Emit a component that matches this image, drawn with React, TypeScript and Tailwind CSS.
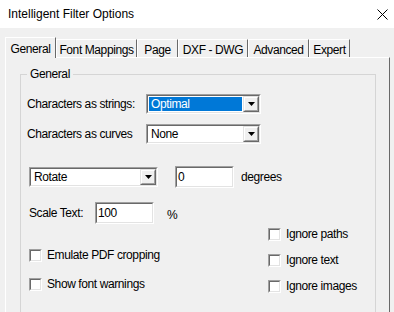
import React from "react";

// classic 3D bevels
const sunkenOuter =
  "border border-t-[#a0a0a0] border-l-[#a0a0a0] border-b-white border-r-white";
const sunkenInner =
  "border border-t-[#696969] border-l-[#696969] border-b-[#e3e3e3] border-r-[#e3e3e3]";

function DropButton() {
  return (
    <div className="flex w-[16px] border border-t-[#e3e3e3] border-l-[#e3e3e3] border-b-[#696969] border-r-[#696969]">
      <div className="flex flex-1 items-center justify-center border border-t-white border-l-white border-b-[#a0a0a0] border-r-[#a0a0a0] bg-[#f0f0f0]">
        <svg width="7" height="4" viewBox="0 0 7 4">
          <polygon points="0,0 7,0 3.5,4" fill="#000" />
        </svg>
      </div>
    </div>
  );
}

function Combo({ value, className, selected }: { value: string; className: string; selected?: boolean }) {
  return (
    <div className={`flex h-[20px] ${sunkenOuter} ${className}`}>
      <div className={`flex flex-1 bg-white ${sunkenInner}`}>
        <div className="flex flex-1 p-[1px]">
          <div
            className={`flex flex-1 items-center pl-[2px] ${
              selected ? "bg-[#0078d7] text-white" : "text-black"
            }`}
          >
            {value}
          </div>
        </div>
        <DropButton />
      </div>
    </div>
  );
}

function Field({ value, className }: { value: string; className: string }) {
  return (
    <div className={`flex h-[22px] ${sunkenOuter} ${className}`}>
      <div className={`flex-1 bg-white pl-[1px] pt-[2px] leading-[14px] ${sunkenInner}`}>{value}</div>
    </div>
  );
}

function Check({ label }: { label: string }) {
  return (
    <div className="flex h-[16px] items-center">
      <div className={`flex h-[13px] w-[13px] ${sunkenOuter}`}>
        <div className={`flex-1 bg-white ${sunkenInner}`} />
      </div>
      <span className="ml-[5px]">{label}</span>
    </div>
  );
}

const tabs = [
  { label: "Font Mappings", w: "w-[81px]" },
  { label: "Page", w: "w-[41px]" },
  { label: "DXF - DWG", w: "w-[70px]" },
  { label: "Advanced", w: "w-[61px]" },
  { label: "Expert", w: "w-[41px]" },
];

export default function App() {
  return (
    <div
      className="flex h-[312px] w-[394px] flex-col overflow-hidden bg-[#f0f0f0] text-[12px] tracking-[-0.4px] text-black"
      style={{ fontFamily: '"Liberation Sans", Arial, sans-serif' }}
    >
      {/* ── Title bar ─────────────────────────────────────────── */}
      <div className="flex h-[28px] shrink-0 items-center justify-between bg-white pl-[8px] pr-[6px]">
        <span className="text-[12px] tracking-normal">Intelligent Filter Options</span>
        <svg width="11" height="11" viewBox="0 0 11 11" className="mr-[0px]">
          <path d="M0.5 0.5 L10.5 10.5 M10.5 0.5 L0.5 10.5" stroke="#000" strokeWidth="1" />
        </svg>
      </div>

      {/* ── Tab strip ─────────────────────────────────────────── */}
      <div className="mt-[9px] flex h-[20px] shrink-0 items-end pl-[5px]">
        <div className="relative z-10 -mb-px flex h-[21px] w-[51px] justify-center border-l border-t border-r border-l-white border-t-white border-r-[#696969] bg-[#f0f0f0] pt-[2px]">
          General
        </div>
        {tabs.map((t) => (
          <div
            key={t.label}
            className={`flex h-[18px] ${t.w} justify-center border-l border-t border-r border-l-white border-t-white border-r-[#696969] pt-[1px]`}
          >
            {t.label}
          </div>
        ))}
      </div>

      {/* ── Tab page ──────────────────────────────────────────── */}
      <div className="ml-[5px] flex h-[300px] w-[385px] shrink-0 border-l border-t border-r border-l-white border-t-white border-r-[#696969] pl-[14px] pr-[13px] pt-[9px]">
        <fieldset className="h-[280px] flex-1 border border-[#d5d5d5]">
          <legend className="ml-[6px] px-[3px] leading-[14px]">General</legend>

          <div className="mt-[13px] flex h-[20px] items-center pl-[6px]">
            <span className="w-[119px]">Characters as strings:</span>
            <Combo value="Optimal" className="w-[115px]" selected />
          </div>

          <div className="mt-[10px] flex h-[20px] items-center pl-[6px]">
            <span className="w-[119px]">Characters as curves</span>
            <Combo value="None" className="w-[115px]" />
          </div>

          <div className="mt-[22px] flex h-[22px] items-center pl-[8px]">
            <Combo value="Rotate" className="w-[129px]" />
            <Field value="0" className="ml-[17px] w-[59px]" />
            <span className="ml-[7px]">degrees</span>
          </div>

          <div className="mt-[14px] flex h-[22px] items-center pl-[8px]">
            <span className="w-[66px]">Scale Text:</span>
            <Field value="100" className="w-[59px]" />
            <span className="ml-[13px] mt-[3px]">%</span>
          </div>

          <div className="flex pl-[8px]">
            <div className="flex w-[239px] flex-col">
              <div className="mt-[23px]">
                <Check label="Emulate PDF cropping" />
              </div>
              <div className="mt-[13px]">
                <Check label="Show font warnings" />
              </div>
            </div>
            <div className="flex flex-col gap-[10px] pt-[2px]">
              <Check label="Ignore paths" />
              <Check label="Ignore text" />
              <Check label="Ignore images" />
            </div>
          </div>
        </fieldset>
      </div>
    </div>
  );
}
